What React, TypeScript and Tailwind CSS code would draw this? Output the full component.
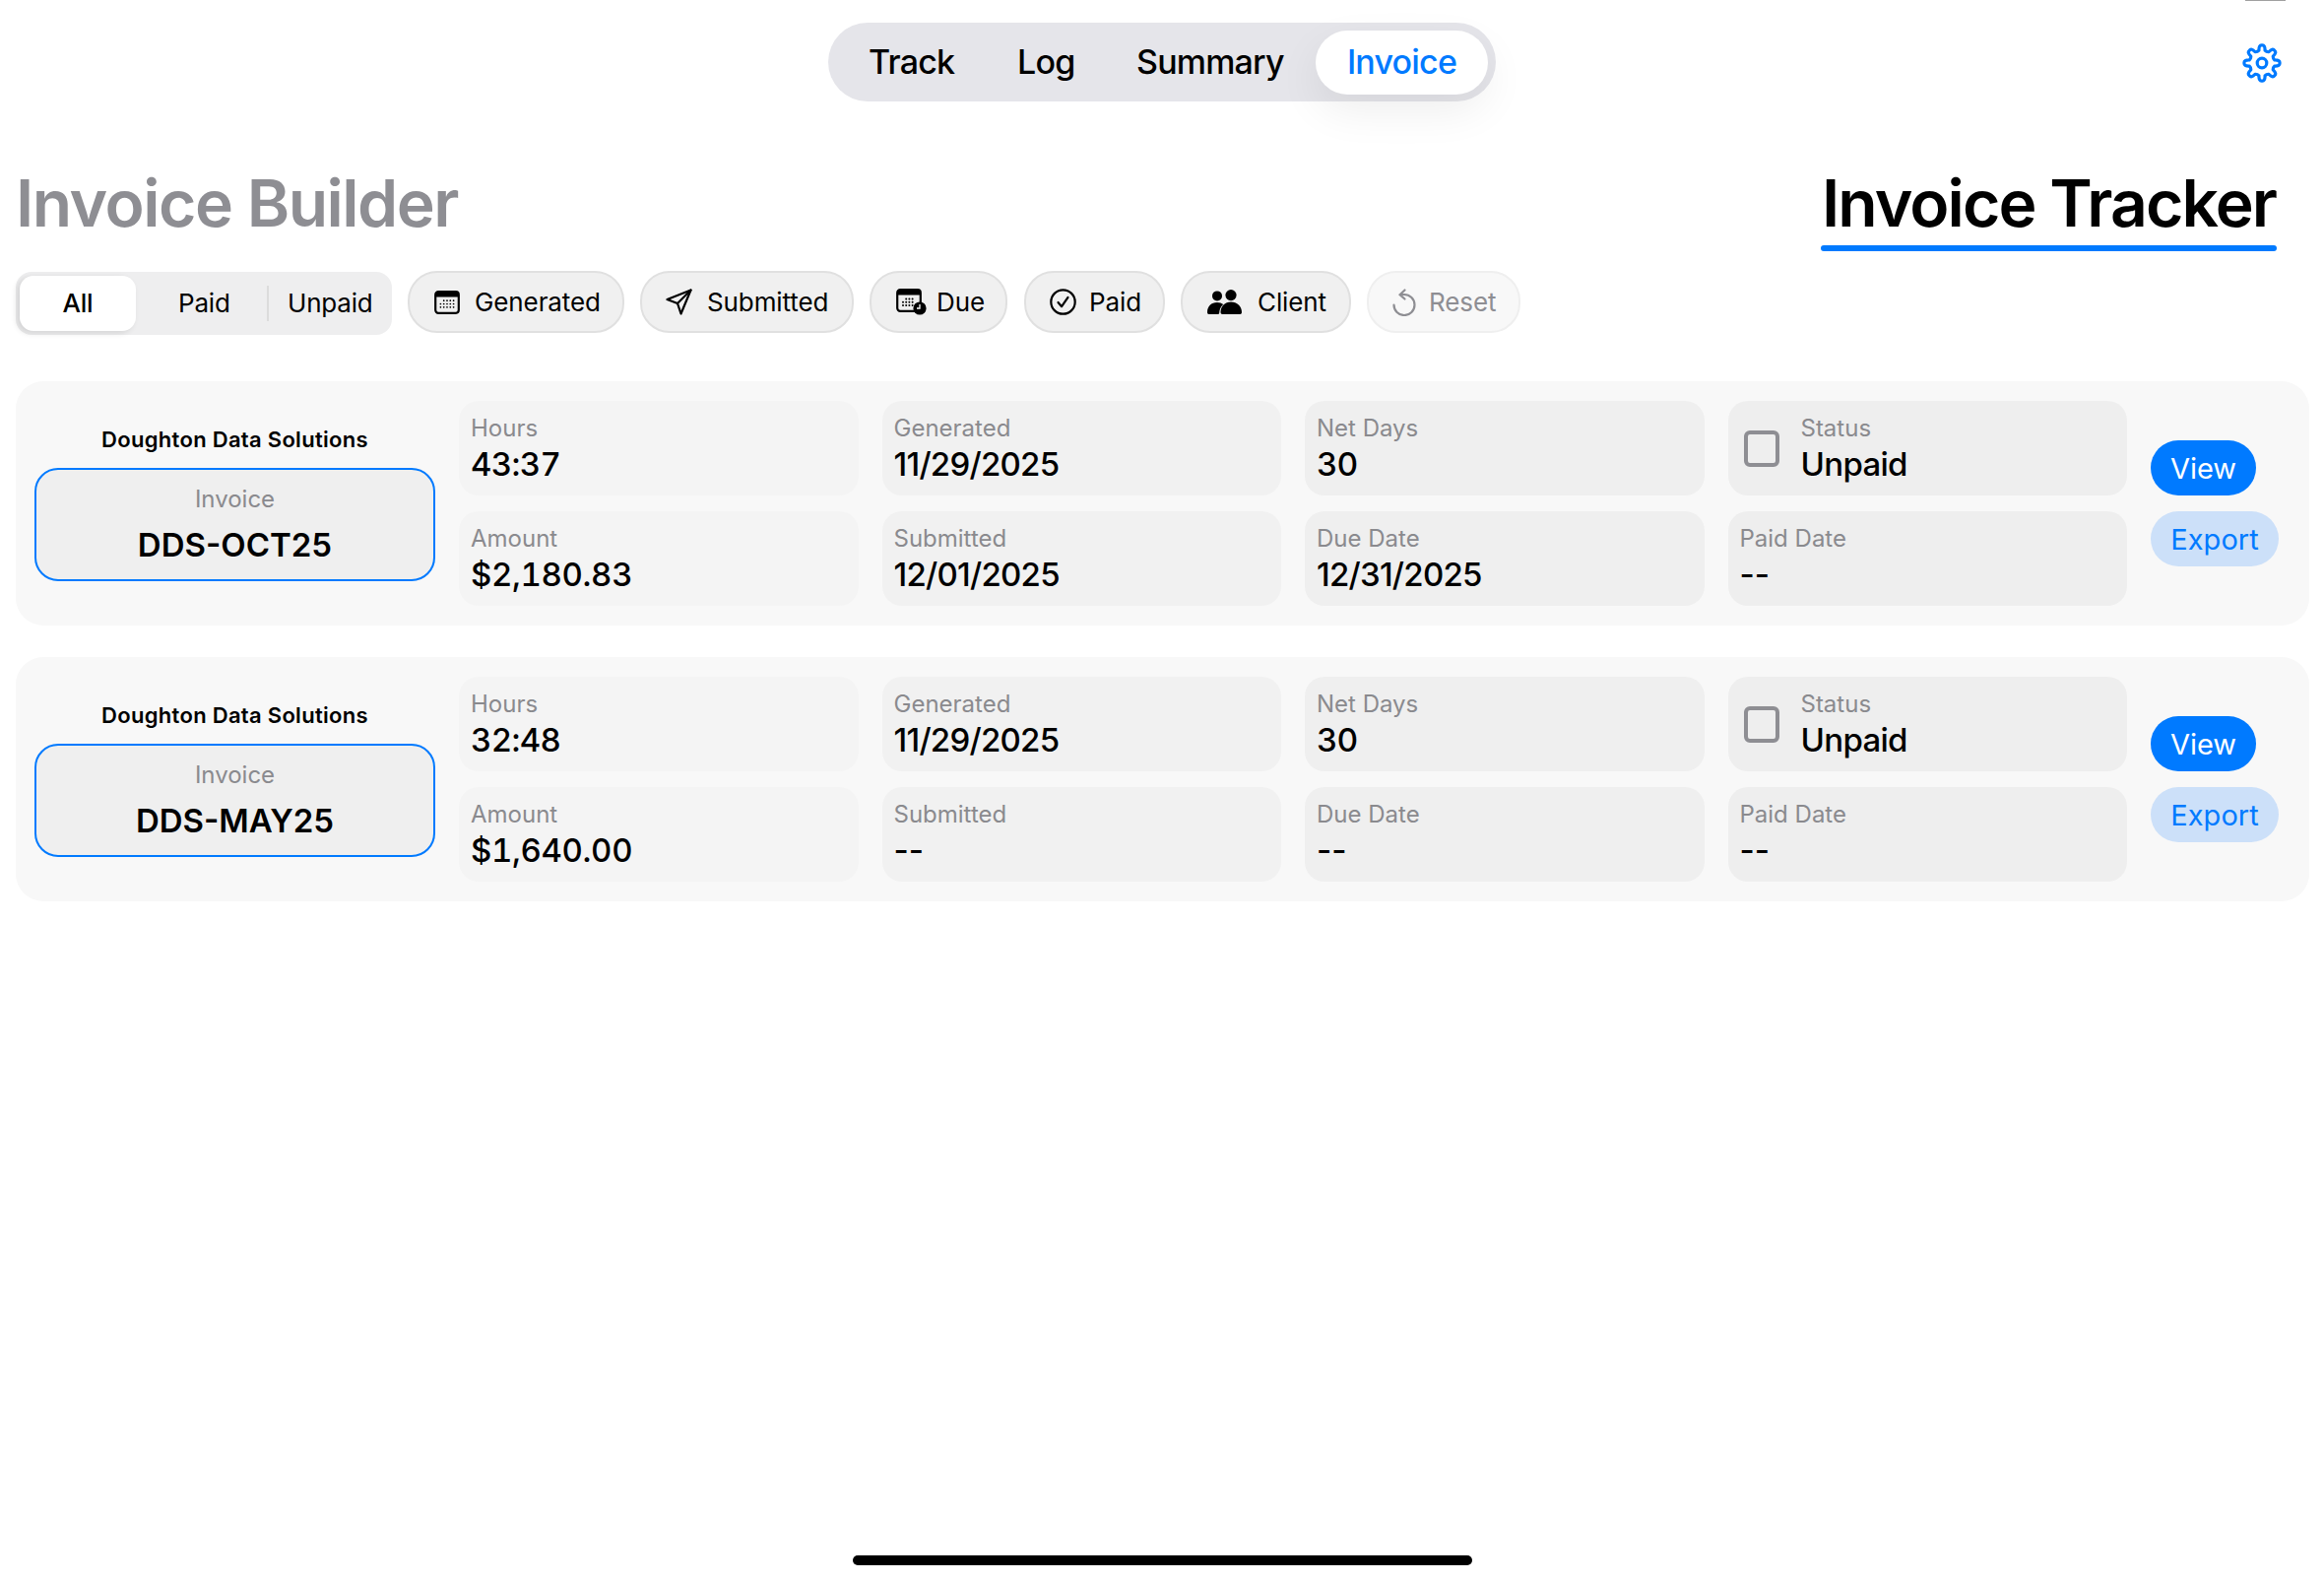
import React from "react";

const gearPath = (() => {
  const cx = 20, cy = 20, teeth = 8, R = 17.4, r = 13.2;
  const pts: string[] = [];
  for (let i = 0; i < teeth; i++) {
    const a = (i / teeth) * Math.PI * 2 - Math.PI / 2;
    const w = (Math.PI * 2) / teeth;
    const p = (rad: number, off: number) =>
      `${(cx + rad * Math.cos(a + off * w)).toFixed(2)} ${(cy + rad * Math.sin(a + off * w)).toFixed(2)}`;
    pts.push(`${i === 0 ? "M" : "L"}${p(r, -0.3)}`);
    pts.push(`Q${p(R + 1.4, -0.22)} ${p(R + 0.6, 0)}`);
    pts.push(`Q${p(R + 1.4, 0.22)} ${p(r, 0.3)}`);
    pts.push(`Q${p(r - 1.2, 0.5)} ${p(r, 0.7)}`);
  }
  return pts.join(" ") + "Z";
})();

const Gear = () => (
  <svg width="40" height="40" viewBox="0 0 40 40" fill="none" stroke="#007aff" strokeWidth="3.2" strokeLinejoin="round">
    <path d={gearPath} />
    <circle cx="20" cy="20" r="4.8" />
  </svg>
);

const Dots = ({ x, y, cols, rows, gap, r }: { x: number; y: number; cols: number; rows: number; gap: number; r: number }) => (
  <g fill="#000">
    {Array.from({ length: rows }).flatMap((_, j) =>
      Array.from({ length: cols }).map((_, i) =>
        j === 0 && i === 0 ? null : <circle key={`${i}-${j}`} cx={x + i * gap} cy={y + j * gap} r={r} />
      )
    )}
  </g>
);

const CalendarIcon = () => (
  <svg width="26" height="24" viewBox="0 0 26 24" className="shrink-0">
    <rect x="1.2" y="1.2" width="23.6" height="21.6" rx="3" fill="none" stroke="#000" strokeWidth="2.2" />
    <path d="M1 6.5V4a3 3 0 0 1 3-3h18a3 3 0 0 1 3 3v2.5z" fill="#000" />
    <Dots x={6.4} y={10.2} cols={5} rows={3} gap={3.3} r={0.85} />
  </svg>
);

const SendIcon = () => (
  <svg width="27" height="27" viewBox="0 0 27 27" fill="none" stroke="#000" strokeWidth="2.2" strokeLinejoin="round" strokeLinecap="round" className="shrink-0">
    <path d="M25.5 1.5 1.5 11l10.5 4 3.5 10.5z" />
    <path d="M25.5 1.5 12 15" />
  </svg>
);

const DueIcon = () => (
  <svg width="31" height="27" viewBox="0 0 31 27" className="shrink-0">
    <rect x="1.2" y="1.2" width="23.6" height="21.6" rx="3" fill="none" stroke="#000" strokeWidth="2.2" />
    <path d="M1 6.5V4a3 3 0 0 1 3-3h18a3 3 0 0 1 3 3v2.5z" fill="#000" />
    <Dots x={7} y={10.5} cols={4} rows={3} gap={3.2} r={1} />
    <circle cx="24" cy="20" r="6.6" fill="#000" />
    <path d="M24 16v4h-3" stroke="#fff" strokeWidth="1.3" fill="none" />
  </svg>
);

const CheckIcon = () => (
  <svg width="27" height="27" viewBox="0 0 27 27" fill="none" stroke="#000" strokeWidth="2.2" strokeLinecap="round" strokeLinejoin="round" className="shrink-0">
    <circle cx="13.5" cy="13.5" r="12.2" />
    <path d="m8.5 14 3.6 4.2 6.4-9.4" />
  </svg>
);

const PeopleIcon = () => (
  <svg width="35" height="25" viewBox="0 0 35 25" fill="#000" className="shrink-0">
    <circle cx="10" cy="6.4" r="5" />
    <circle cx="24" cy="5.6" r="5.6" />
    <path d="M0 23c0-6 4-10 10-10 2.6 0 4.6.8 6.2 2-2.4 2-3.8 5-4 8.6 0 .8-.4 1.4-1.2 1.4H1.5C.6 25 0 24 0 23z" />
    <path d="M13.5 23c0-6 4.4-10.4 10.5-10.4S35 17 35 23c0 1.2-.7 2-1.7 2H15.2c-1 0-1.7-.8-1.7-2z" />
  </svg>
);

const ResetIcon = () => (
  <svg width="24" height="28" viewBox="0 0 24 28" fill="none" stroke="#8e8e93" strokeWidth="2.2" strokeLinecap="round" strokeLinejoin="round" className="shrink-0">
    <path d="M12 6a10.5 10.5 0 1 1-10.5 10.5" />
    <path d="M12 6 7.5 6.2M7.5 6.2 12.5 1.5M7.5 6.2 12.5 10.5" />
  </svg>
);

const Chip = ({ icon, label, className, dim }: { icon: React.ReactNode; label: string; className: string; dim?: boolean }) => (
  <div
    className={`flex h-[63px] items-center rounded-[30px] border-2 ${
      dim ? "border-[#efefef] bg-[#f8f8f8] text-[#8e8e93]" : "border-[#e0e0e0] bg-[#f0f0f0] text-black"
    } ${className}`}
  >
    {icon}
    <span className="text-[26px] leading-none tracking-[-0.1px]">{label}</span>
  </div>
);

const Cell = ({ label, value, bg, check }: { label: string; value: string; bg: string; check?: boolean }) => {
  let track = "tracking-[0px]";
  if (value.includes("/")) track = "tracking-[-0.75px]";
  else if (value.includes("$")) track = "tracking-[-0.35px] tabular-nums";
  else if (value.includes(":")) track = "tracking-[-0.6px] tabular-nums";
  else if (check) track = "tracking-[-0.7px]";
  return (
    <div className={`flex h-[96px] items-center rounded-[20px] ${check ? "pl-[16px]" : "pl-[12px]"} ${bg}`}>
      {check && <div className="mr-[22px] h-[37px] w-[36px] rounded-[6px] border-[4px] border-[#8e8e93]" />}
      <div className="flex flex-col">
        <span className="text-[24px] leading-[30px] text-[#8a8a8e]">{label}</span>
        <span className={`mt-[2px] text-[33px] font-medium leading-[38px] text-black ${track}`}>{value}</span>
      </div>
    </div>
  );
};

const COL = ["bg-[#f4f4f4]", "bg-[#f1f1f1]", "bg-[#efefef]", "bg-[#eeeeee]"];

const Card = ({ id, hours, amount, submitted, due }: { id: string; hours: string; amount: string; submitted: string; due: string }) => (
  <div className="flex h-[248px] rounded-[28px] bg-[#f8f8f8] p-[20px]">
    <div className="-ml-[1px] flex w-[407px] shrink-0 flex-col justify-center">
      <div className="text-center text-[22px] font-semibold leading-[28px] tracking-[0.3px] text-black">Doughton Data Solutions</div>
      <div className="mt-[15px] flex h-[115px] flex-col items-center justify-center rounded-[24px] border-2 border-[#007aff] bg-[#efefef]">
        <span className="text-[24px] leading-[32px] text-[#8a8a8e]">Invoice</span>
        <span className="mb-[2px] mt-[10px] text-[33px] font-semibold leading-[40px] text-black">{id}</span>
      </div>
    </div>
    <div className="ml-[24px] grid w-[1694px] shrink-0 grid-cols-4 gap-x-[24px] gap-y-[16px]">
      <Cell label="Hours" value={hours} bg={COL[0]} />
      <Cell label="Generated" value="11/29/2025" bg={COL[1]} />
      <Cell label="Net Days" value="30" bg={COL[2]} />
      <Cell label="Status" value="Unpaid" bg={COL[3]} check />
      <Cell label="Amount" value={amount} bg={COL[0]} />
      <Cell label="Submitted" value={submitted} bg={COL[1]} />
      <Cell label="Due Date" value={due} bg={COL[2]} />
      <Cell label="Paid Date" value="--" bg={COL[3]} />
    </div>
    <div className="ml-[24px] flex flex-col items-start gap-[16px] pt-[40px]">
      <button className="flex h-[56px] w-[107px] items-center justify-center rounded-[28px] bg-[#007aff] text-[29px] leading-none text-white">View</button>
      <button className="flex h-[56px] w-[130px] items-center justify-center rounded-[28px] bg-[#cce0f9] text-[29px] leading-none text-[#007aff]">Export</button>
    </div>
  </div>
);

export default function App() {
  return (
    <div className="relative flex h-[1605px] w-[2360px] flex-col overflow-hidden bg-white font-['Inter','Liberation_Sans',sans-serif]">
      <div className="absolute right-[39px] top-0 h-[1px] w-[41px] bg-[#a0a0a0]" />

      <header className="flex items-center pl-[841px] pr-[43px] pt-[23px]">
        <nav className="flex h-[80px] w-[678px] items-center rounded-[40px] bg-[#e5e5ea] pl-[41px] pr-[7px] text-[34px] font-medium leading-none tracking-[-0.8px] text-black">
          <span className="w-[151px]">Track</span>
          <span className="w-[121px]">Log</span>
          <span className="w-[182px]">Summary</span>
          <span className="flex h-[65px] w-[175px] items-center justify-center rounded-[33px] bg-white text-[#007aff] shadow-[0_16px_44px_rgba(0,0,0,0.07)]">Invoice</span>
        </nav>
        <div className="ml-auto mt-[2px]">
          <Gear />
        </div>
      </header>

      <section className="mt-[65px] flex items-start justify-between pl-[16px] pr-[48px]">
        <h1 className="text-[66px] font-semibold leading-[76px] tracking-[-1.5px] text-[#8e8e93]">Invoice Builder</h1>
        <div className="flex w-[463px] flex-col items-center">
          <h1 className="whitespace-nowrap text-[66px] font-semibold leading-[76px] tracking-[-1.9px] text-black">Invoice Tracker</h1>
          <div className="mt-[5px] h-[6px] w-full rounded-full bg-[#007aff]" />
        </div>
      </section>

      <section className="mt-[20px] flex items-start pl-[16px]">
        <div className="mt-[1px] flex h-[64px] w-[382px] items-center rounded-[16px] bg-[#eeeeef] pl-[4px] text-[26px] leading-none tracking-[-0.2px] text-black">
          <span className="flex h-[56px] w-[118px] items-center justify-center rounded-[14px] bg-white font-medium shadow-[-3px_2px_6px_rgba(0,0,0,0.12)]">All</span>
          <span className="ml-[43px] w-[90px]">Paid</span>
          <span className="h-[36px] w-[2px] bg-[#dcdcdc]" />
          <span className="ml-[19px]">Unpaid</span>
        </div>
        <Chip icon={<CalendarIcon />} label="Generated" className="ml-[16px] w-[220px] gap-[15px] pl-[25px]" />
        <Chip icon={<SendIcon />} label="Submitted" className="ml-[16px] w-[217px] gap-[15px] pl-[24px]" />
        <Chip icon={<DueIcon />} label="Due" className="ml-[16px] w-[140px] gap-[10px] pl-[25px]" />
        <Chip icon={<CheckIcon />} label="Paid" className="ml-[17px] w-[143px] gap-[13px] pl-[24px]" />
        <Chip icon={<PeopleIcon />} label="Client" className="ml-[16px] w-[173px] gap-[16px] pl-[25px]" />
        <Chip icon={<ResetIcon />} label="Reset" className="ml-[16px] w-[156px] gap-[13px] pl-[24px]" dim />
      </section>

      <main className="ml-[16px] mt-[47px] flex w-[2329px] flex-col gap-[32px] self-start">
        <Card id="DDS-OCT25" hours="43:37" amount="$2,180.83" submitted="12/01/2025" due="12/31/2025" />
        <Card id="DDS-MAY25" hours="32:48" amount="$1,640.00" submitted="--" due="--" />
      </main>

      <div className="mb-[16px] mt-auto h-[10px] w-[629px] self-center rounded-full bg-black" />
    </div>
  );
}
